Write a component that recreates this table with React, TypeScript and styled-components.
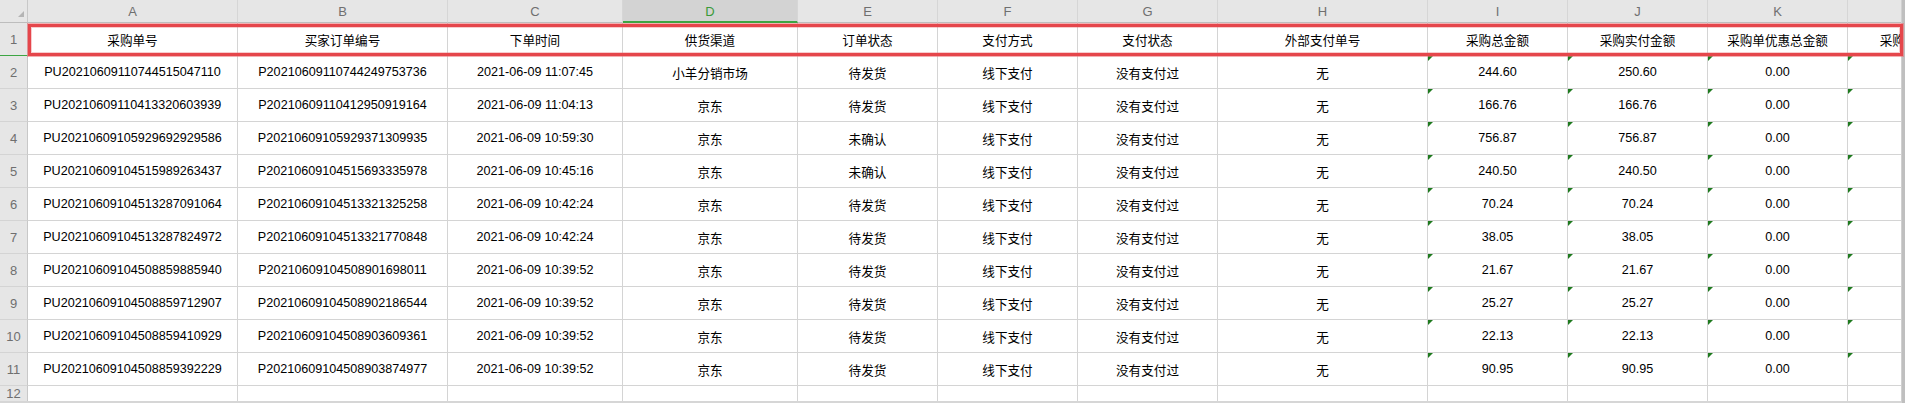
import * as React from 'react';
import styled, { createGlobalStyle } from 'styled-components';

const GlobalStyle = createGlobalStyle`
  html, body {
    margin: 0;
    padding: 0;
    background: #ffffff;
  }
  body {
    font-family: "Liberation Sans", "Noto Sans CJK SC", Arial, sans-serif;
  }
`;

interface ColumnDef {
  letter: string;
  width: number;
  flagged?: boolean;
}

const columns: ColumnDef[] = [
  { letter: 'A', width: 210 },
  { letter: 'B', width: 210 },
  { letter: 'C', width: 175 },
  { letter: 'D', width: 175 },
  { letter: 'E', width: 140 },
  { letter: 'F', width: 140 },
  { letter: 'G', width: 140 },
  { letter: 'H', width: 210 },
  { letter: 'I', width: 140, flagged: true },
  { letter: 'J', width: 140, flagged: true },
  { letter: 'K', width: 140, flagged: true },
  { letter: 'L', width: 140, flagged: true },
];

const headers = [
  '采购单号',
  '买家订单编号',
  '下单时间',
  '供货渠道',
  '订单状态',
  '支付方式',
  '支付状态',
  '外部支付单号',
  '采购总金额',
  '采购实付金额',
  '采购单优惠总金额',
  '采购运费金额',
];

const rows: string[][] = [
  ['PU20210609110744515047110', 'P20210609110744249753736', '2021-06-09 11:07:45', '小羊分销市场', '待发货', '244.60', '250.60'],
  ['PU20210609110413320603939', 'P20210609110412950919164', '2021-06-09 11:04:13', '京东', '待发货', '166.76', '166.76'],
  ['PU20210609105929692929586', 'P20210609105929371309935', '2021-06-09 10:59:30', '京东', '未确认', '756.87', '756.87'],
  ['PU20210609104515989263437', 'P20210609104515693335978', '2021-06-09 10:45:16', '京东', '未确认', '240.50', '240.50'],
  ['PU20210609104513287091064', 'P20210609104513321325258', '2021-06-09 10:42:24', '京东', '待发货', '70.24', '70.24'],
  ['PU20210609104513287824972', 'P20210609104513321770848', '2021-06-09 10:42:24', '京东', '待发货', '38.05', '38.05'],
  ['PU20210609104508859885940', 'P20210609104508901698011', '2021-06-09 10:39:52', '京东', '待发货', '21.67', '21.67'],
  ['PU20210609104508859712907', 'P20210609104508902186544', '2021-06-09 10:39:52', '京东', '待发货', '25.27', '25.27'],
  ['PU20210609104508859410929', 'P20210609104508903609361', '2021-06-09 10:39:52', '京东', '待发货', '22.13', '22.13'],
  ['PU20210609104508859392229', 'P20210609104508903874977', '2021-06-09 10:39:52', '京东', '待发货', '90.95', '90.95'],
];

const toCells = (r: string[]) => [r[0], r[1], r[2], r[3], r[4], '线下支付', '没有支付过', '无', r[5], r[6], '0.00', ''];

const template = `28px ${columns.map((c) => `${c.width}px`).join(' ')}`;

export default function App() {
  return (
    <>
      <GlobalStyle />
      <Page>
        <Sheet $template={template}>
          <Corner>
            <SelectAll />
          </Corner>
          {columns.map((c) => (
            <ColHead key={c.letter} $selected={c.letter === 'D'}>
              {c.letter}
            </ColHead>
          ))}

          <RowHead $active>1</RowHead>
          {headers.map((h, i) => (
            <Cell key={i}>{h}</Cell>
          ))}

          {rows.map((r, ri) => (
            <React.Fragment key={ri}>
              <RowHead>{ri + 2}</RowHead>
              {toCells(r).map((v, ci) => (
                <Cell key={ci} $flag={columns[ci].flagged}>
                  {v}
                </Cell>
              ))}
            </React.Fragment>
          ))}

          <RowHead>12</RowHead>
          {columns.map((c) => (
            <Cell key={c.letter} />
          ))}
        </Sheet>
        <ScrollEdge />
        <Highlight />
      </Page>
    </>
  );
}

const Page = styled.div`
  position: relative;
  display: flex;
  width: 1905px;
  height: 403px;
  overflow: hidden;
  background: #ffffff;
`;

const Sheet = styled.div<{ $template: string }>`
  box-sizing: border-box;
  flex: 0 0 1902px;
  height: 403px;
  display: grid;
  grid-template-columns: ${(p) => p.$template};
  grid-template-rows: 23px repeat(11, 33px) 16px;
  align-content: start;
  overflow: hidden;
  border-right: 1px solid #d0d0d0;
  border-bottom: 2px solid #d6d6d6;
`;

const ScrollEdge = styled.div`
  flex: 1 1 auto;
  background: #bfbfbf;
`;

const Corner = styled.div`
  box-sizing: border-box;
  display: flex;
  justify-content: flex-end;
  align-items: flex-end;
  padding: 0 3px 5px 0;
  background: #e6e6e6;
  border-right: 1px solid #c8c8c8;
  border-bottom: 1px solid #bdbdbd;
`;

const SelectAll = styled.div`
  width: 0;
  height: 0;
  border-left: 6px solid transparent;
  border-bottom: 6px solid #b4b4b4;
`;

const ColHead = styled.div<{ $selected?: boolean }>`
  box-sizing: border-box;
  display: flex;
  align-items: center;
  justify-content: center;
  padding-top: 1px;
  background: ${(p) => (p.$selected ? '#d3d3d3' : '#e6e6e6')};
  color: ${(p) => (p.$selected ? '#3a9a3a' : '#6f6f6f')};
  font-size: 13px;
  border-right: 1px solid #d6d6d6;
  border-bottom: ${(p) => (p.$selected ? '2px solid #3da543' : '1px solid #bdbdbd')};
  white-space: nowrap;
`;

const RowHead = styled.div<{ $active?: boolean }>`
  box-sizing: border-box;
  display: flex;
  align-items: center;
  justify-content: center;
  background: #e6e6e6;
  color: #6f6f6f;
  font-size: 13px;
  border-right: 1px solid #c8c8c8;
  border-bottom: 1px solid ${(p) => (p.$active ? '#3da543' : '#d4d4d4')};
`;

const Cell = styled.div<{ $flag?: boolean }>`
  position: relative;
  box-sizing: border-box;
  display: flex;
  align-items: center;
  justify-content: center;
  font-size: 12.6px;
  color: #000000;
  border-right: 1px solid #d4d4d4;
  border-bottom: 1px solid #d4d4d4;
  white-space: nowrap;
  overflow: hidden;

  &::before {
    content: '';
    display: ${(p) => (p.$flag ? 'block' : 'none')};
    position: absolute;
    top: 0;
    left: 0;
    width: 0;
    height: 0;
    border-top: 5px solid #1e7a1e;
    border-right: 5px solid transparent;
  }
`;

const Highlight = styled.div`
  position: absolute;
  left: 28px;
  top: 24px;
  width: 1875px;
  height: 32px;
  box-sizing: border-box;
  border: 3px solid #e5464b;
  box-shadow: 0 0 0 1px rgba(236, 110, 114, 0.55), inset 0 0 0 1px rgba(236, 110, 114, 0.35);
  pointer-events: none;
`;
